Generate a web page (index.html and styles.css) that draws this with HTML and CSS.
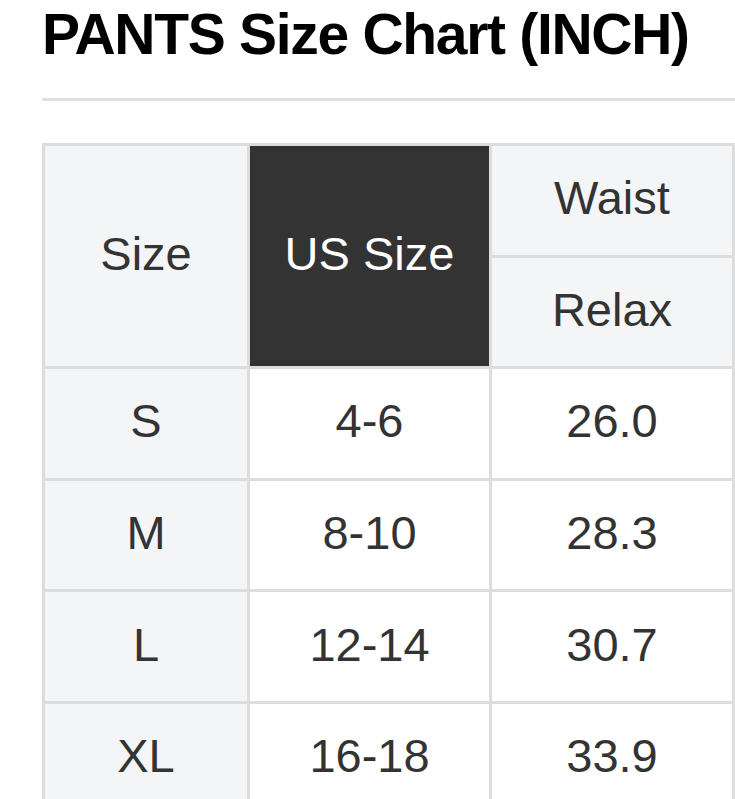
FILE: index.html
```html
<!DOCTYPE html>
<html>
<head>
<meta charset="utf-8">
<link rel="stylesheet" href="styles.css">
</head>
<body>
<div class="page">
  <h1 class="title">PANTS Size Chart (INCH)</h1>
  <hr class="rule">
  <table class="chart">
    <thead>
      <tr>
        <th class="side" rowspan="2">Size</th>
        <th class="dark" rowspan="2">US Size</th>
        <th class="head">Waist</th>
      </tr>
      <tr>
        <th class="head">Relax</th>
      </tr>
    </thead>
    <tbody>
      <tr><td class="side">S</td><td>4-6</td><td>26.0</td></tr>
      <tr><td class="side">M</td><td>8-10</td><td>28.3</td></tr>
      <tr><td class="side">L</td><td>12-14</td><td>30.7</td></tr>
      <tr><td class="side">XL</td><td>16-18</td><td>33.9</td></tr>
    </tbody>
  </table>
</div>
</body>
</html>
```

FILE: styles.css
```css
html, body {
  margin: 0;
  padding: 0;
  background: #fff;
  overflow: hidden;
}
.page {
  padding-left: 42px;
  width: 693px;
  font-family: "Liberation Sans", Arial, sans-serif;
}
.title {
  margin: 0;
  padding-top: 2px;
  font-size: 57px;
  font-weight: bold;
  line-height: 64px;
  color: #000;
  letter-spacing: -1.3px;
}
.rule {
  margin: 32px 0 0 0;
  border: 0;
  height: 3px;
  background: #e0e0e0;
}
.chart {
  margin-top: 42px;
  width: 693px;
  border-collapse: collapse;
  table-layout: fixed;
  font-size: 47px;
  color: #333;
}
.chart th, .chart td {
  border: 3px solid #dddddd;
  height: 103.6px;
  padding: 0 0 5px 0;
  text-align: center;
  vertical-align: middle;
  font-weight: normal;
}
.chart th.side { width: 202px; }
.chart th.dark { width: 239px; }
.side, .head {
  background: #f4f5f7;
}
.dark {
  background: #333333;
  color: #fff;
}
.chart td {
  background: #fff;
}
.chart td.side {
  background: #f4f5f7;
}
```
